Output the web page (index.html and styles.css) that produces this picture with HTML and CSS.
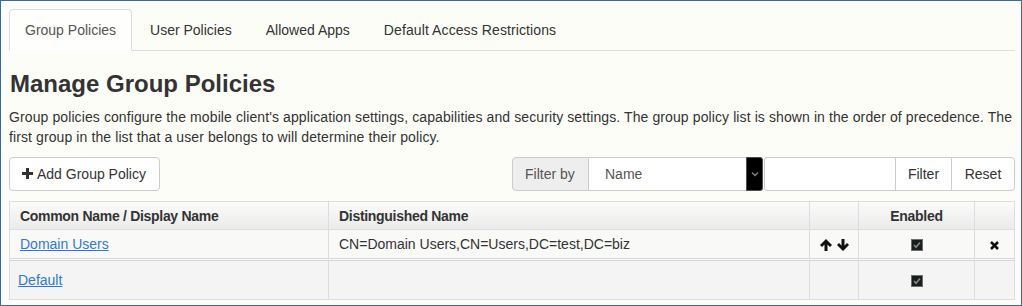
FILE: index.html
```html
<!DOCTYPE html>
<html lang="en">
<head>
<meta charset="utf-8">
<title>Manage Group Policies</title>
<link rel="stylesheet" href="styles.css">
</head>
<body>
<div class="frame">
  <ul class="tabs">
    <li class="tab active"><a href="#">Group Policies</a></li>
    <li class="tab"><a href="#">User Policies</a></li>
    <li class="tab"><a href="#">Allowed Apps</a></li>
    <li class="tab"><a href="#">Default Access Restrictions</a></li>
  </ul>

  <h3 class="title">Manage Group Policies</h3>
  <p class="lead">Group policies configure the mobile client's application settings, capabilities and security settings. The group policy list is shown in the order of precedence. The first group in the list that a user belongs to will determine their policy.</p>

  <div class="toolbar">
    <button class="btn add-btn" type="button">
      <svg class="plus" width="11" height="11" viewBox="0 0 11 11"><rect x="4" y="0" width="3" height="11" fill="#333"/><rect x="0" y="4" width="11" height="3" fill="#333"/></svg>
      <span>Add Group Policy</span>
    </button>

    <div class="filter-group">
      <span class="addon">Filter by</span>
      <div class="select">
        <span class="select-text">Name</span>
        <span class="select-arrow">
          <svg width="8" height="6" viewBox="0 0 8 6"><path d="M1 1.5 L4 4.5 L7 1.5" fill="none" stroke="#7d8584" stroke-width="1.4"/></svg>
        </span>
      </div>
      <input class="filter-input" type="text">
      <button class="btn grp-btn" type="button">Filter</button>
      <button class="btn grp-btn last" type="button">Reset</button>
    </div>
  </div>

  <table class="grid">
    <thead>
      <tr>
        <th class="c1">Common Name / Display Name</th>
        <th class="c2">Distinguished Name</th>
        <th class="c3"></th>
        <th class="c4 center">Enabled</th>
        <th class="c5"></th>
      </tr>
    </thead>
    <tbody>
      <tr class="row1">
        <td><a class="link" href="#">Domain Users</a></td>
        <td>CN=Domain Users,CN=Users,DC=test,DC=biz</td>
        <td class="center">
          <span class="arrows">
            <svg width="12" height="12" viewBox="0 0 12 12"><polygon points="6,0 12,5.9 10,8 7.5,5.6 7.5,12 4.5,12 4.5,5.6 2,8 0,5.9" fill="#111"/></svg>
            <svg width="12" height="12" viewBox="0 0 12 12"><polygon points="6,12 12,6.1 10,4 7.5,6.4 7.5,0 4.5,0 4.5,6.4 2,4 0,6.1" fill="#111"/></svg>
          </span>
        </td>
        <td class="center">
          <svg class="check" width="12" height="12" viewBox="0 0 12 12"><rect x="0.5" y="0.5" width="11" height="11" fill="#1b1d1d" stroke="#69716f"/><path d="M3 6 L5 8.2 L9 3.6" fill="none" stroke="#7e8d8c" stroke-width="1.6"/></svg>
        </td>
        <td class="center">
          <svg width="9" height="9" viewBox="0 0 9 9"><path d="M1 1 L8 8 M8 1 L1 8" stroke="#111" stroke-width="2.6"/></svg>
        </td>
      </tr>
    </tbody>
    <tbody>
      <tr class="row2">
        <td class="tight"><a class="link" href="#">Default</a></td>
        <td></td>
        <td></td>
        <td class="center">
          <svg class="check" width="12" height="12" viewBox="0 0 12 12"><rect x="0.5" y="0.5" width="11" height="11" fill="#1b1d1d" stroke="#69716f"/><path d="M3 6 L5 8.2 L9 3.6" fill="none" stroke="#7e8d8c" stroke-width="1.6"/></svg>
        </td>
        <td></td>
      </tr>
    </tbody>
  </table>
</div>
</body>
</html>
```

FILE: styles.css
```css
* { box-sizing: border-box; }

html, body {
  margin: 0;
  padding: 0;
}

body {
  font-family: "Liberation Sans", Arial, sans-serif;
  font-size: 14px;
  line-height: 20px;
  color: #333;
  background: #fdfdf8;
}

.frame {
  width: 1022px;
  height: 306px;
  border: 1px solid #3b67a4;
  padding: 8px 6px 0 8px;
  overflow: hidden;
  background: #fdfdf8;
}

.tabs {
  display: flex;
  margin: 0;
  padding: 0;
  list-style: none;
  border-bottom: 1px solid #dcdce2;
}

.tab {
  margin-bottom: -1px;
}

.tab a {
  display: block;
  padding: 10px 15px;
  line-height: 20px;
  margin-right: 2px;
  border: 1px solid transparent;
  border-radius: 4px 4px 0 0;
  color: #333;
  text-decoration: none;
  white-space: nowrap;
}

.tab:last-child a { letter-spacing: 0.1px; }

.tab.active a {
  color: #555;
  background: #fefefd;
  border-color: #dcdce2 #dcdce2 transparent;
}

.title {
  margin: 20px 0 10px 1px;
  font-size: 24px;
  line-height: 1.1;
  font-weight: 700;
  color: #333;
}

.lead {
  margin: 0 0 10px 0;
  letter-spacing: 0.1px;
}

.toolbar {
  display: flex;
  align-items: flex-start;
  margin-bottom: 10px;
}

.btn {
  font-family: inherit;
  font-size: 14px;
  line-height: 20px;
  height: 34px;
  color: #333;
  background: #fff;
  border: 1px solid #ccc;
  border-radius: 4px;
  padding: 6px 12px;
  margin: 0;
  cursor: pointer;
  white-space: nowrap;
}

.add-btn {
  display: flex;
  align-items: center;
  gap: 4px;
  width: 151px;
}

.plus {
  display: block;
  margin-top: -1px;
}

.filter-group {
  display: flex;
  margin-left: auto;
  height: 34px;
}

.addon {
  display: block;
  padding: 6px 12px;
  background: #eee;
  color: #555;
  border: 1px solid #ccc;
  border-radius: 4px 0 0 4px;
  width: 77px;
  white-space: nowrap;
}

.select {
  width: 174px;
  display: flex;
  align-items: center;
  background: #fff;
  border: 1px solid #ccc;
  border-left: 0;
  border-radius: 0 4px 4px 0;
  padding-left: 16px;
  color: #555;
}

.select-text {
  flex: 1;
}

.select-arrow {
  width: 17px;
  align-self: stretch;
  margin: -1px -1px -1px 0;
  background: #000;
  border: 1px solid #4a4f4f;
  border-radius: 0 3px 3px 0;
  display: flex;
  align-items: center;
  justify-content: center;
}

.filter-input {
  width: 132px;
  height: 34px;
  margin: 0 0 0 1px;
  border: 1px solid #ccc;
  border-radius: 3px 0 0 3px;
  background: #fff;
  font-family: inherit;
  font-size: 14px;
  padding: 6px 12px;
}

.grp-btn {
  border-radius: 0;
  margin-left: -1px;
  width: 57px;
  padding: 6px 0;
  text-align: center;
}

.grp-btn.last {
  width: 64px;
  border-radius: 0 4px 4px 0;
}

.grid {
  width: 1006px;
  table-layout: fixed;
  border-collapse: separate;
  border-spacing: 0;
  border-top: 1px solid #ddd;
  border-left: 1px solid #ddd;
}

.grid th,
.grid td {
  border-right: 1px solid #ddd;
  border-bottom: 1px solid #ddd;
  padding: 0 10px;
  text-align: left;
  vertical-align: middle;
}

.grid th {
  height: 28px;
  font-weight: 700;
  letter-spacing: -0.3px;
  background: linear-gradient(#fbfbfa, #ebebeb);
}

.grid .c1 { width: 319px; }
.grid .c2 { width: 481px; }
.grid .c3 { width: 49px; }
.grid .c4 { width: 116px; }
.grid .c5 { width: 40px; }

.grid .center { text-align: center; padding: 0; }

.row1 td {
  height: 31px;
  background: #f9f9f8;
  border-bottom: 3px double #d6d6d6;
}

.row2 td {
  height: 39px;
  background: #f4f4f4;
}

.grid td.tight { padding-left: 8px; }

.link {
  color: #2c7bd7;
  text-decoration: underline;
}

.arrows {
  display: inline-flex;
  gap: 5px;
  vertical-align: middle;
  margin-top: -1px;
}

.arrows svg { display: block; }

.check,
.grid td svg {
  vertical-align: middle;
}

.check { margin-top: -2px; }
```
